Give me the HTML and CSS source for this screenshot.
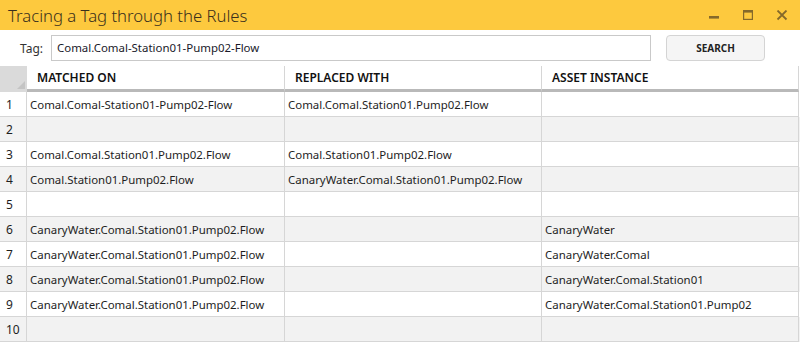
FILE: index.html
```html
<!DOCTYPE html>
<html>
<head>
<meta charset="utf-8">
<link rel="stylesheet" href="styles.css">
</head>
<body>
<div class="window">
  <header class="titlebar">
    <span class="title">Tracing a Tag through the Rules</span>
    <div class="controls">
      <svg class="ctl" width="12" height="12" viewBox="0 0 12 12"><rect x="1" y="6" width="10" height="2.6" fill="currentColor"/></svg>
      <svg class="ctl" width="12" height="12" viewBox="0 0 12 12"><rect x="1.6" y="0.6" width="8.8" height="8.8" fill="none" stroke="currentColor" stroke-width="1.2"/><rect x="1" y="0" width="10" height="2.6" fill="currentColor"/></svg>
      <svg class="ctl" width="12" height="12" viewBox="0 0 12 12"><path d="M1.5 0.5 L10.5 9.5 M10.5 0.5 L1.5 9.5" stroke="currentColor" stroke-width="1.8" fill="none"/></svg>
    </div>
  </header>
  <div class="searchbar">
    <label class="tag-label">Tag:</label>
    <div class="tag-input">Comal.Comal-Station01-Pump02-Flow</div>
    <button class="search-btn">SEARCH</button>
  </div>
  <div class="grid">
    <div class="row head">
      <div class="corner"><span class="tri"></span></div>
      <div class="cell hcell">MATCHED ON</div>
      <div class="cell hcell">REPLACED WITH</div>
      <div class="cell hcell">ASSET INSTANCE</div>
    </div>
    <div class="row"><div class="num">1</div><div class="cell">Comal.Comal-Station01-Pump02-Flow</div><div class="cell">Comal.Comal.Station01.Pump02.Flow</div><div class="cell"></div></div>
    <div class="row alt"><div class="num">2</div><div class="cell"></div><div class="cell"></div><div class="cell"></div></div>
    <div class="row"><div class="num">3</div><div class="cell">Comal.Comal.Station01.Pump02.Flow</div><div class="cell">Comal.Station01.Pump02.Flow</div><div class="cell"></div></div>
    <div class="row alt"><div class="num">4</div><div class="cell">Comal.Station01.Pump02.Flow</div><div class="cell">CanaryWater.Comal.Station01.Pump02.Flow</div><div class="cell"></div></div>
    <div class="row"><div class="num">5</div><div class="cell"></div><div class="cell"></div><div class="cell"></div></div>
    <div class="row alt"><div class="num">6</div><div class="cell">CanaryWater.Comal.Station01.Pump02.Flow</div><div class="cell"></div><div class="cell">CanaryWater</div></div>
    <div class="row"><div class="num">7</div><div class="cell">CanaryWater.Comal.Station01.Pump02.Flow</div><div class="cell"></div><div class="cell">CanaryWater.Comal</div></div>
    <div class="row alt"><div class="num">8</div><div class="cell">CanaryWater.Comal.Station01.Pump02.Flow</div><div class="cell"></div><div class="cell">CanaryWater.Comal.Station01</div></div>
    <div class="row"><div class="num">9</div><div class="cell">CanaryWater.Comal.Station01.Pump02.Flow</div><div class="cell"></div><div class="cell">CanaryWater.Comal.Station01.Pump02</div></div>
    <div class="row alt"><div class="num">10</div><div class="cell"></div><div class="cell"></div><div class="cell"></div></div>
  </div>
</div>
</body>
</html>
```
FILE: styles.css
```css
* { box-sizing: border-box; }
html, body { margin: 0; padding: 0; }
body {
  width: 800px;
  height: 343px;
  overflow: hidden;
  background: #fff;
  font-family: "Noto Sans", "Open Sans", sans-serif;
  font-size: 11.45px;
  color: #1e1e1e;
}
.titlebar {
  height: 30px;
  background: #fdc93e;
  display: flex;
  align-items: center;
  justify-content: space-between;
}
.title {
  padding-left: 8px;
  font-size: 16.7px;
  font-weight: 300;
  color: #3a2f1c;
}
.controls {
  display: flex;
  gap: 22px;
  padding-right: 12px;
  padding-top: 2px;
  color: #85692a;
}
.ctl { display: block; }
.searchbar {
  height: 36px;
  display: flex;
  align-items: center;
}
.tag-label {
  width: 51px;
  padding-left: 20px;
  color: #333;
  font-size: 12px;
}
.tag-input {
  width: 600px;
  height: 26px;
  border: 1px solid #c9c9c9;
  padding-left: 5px;
  line-height: 23px;
  color: #1a1a2a;
}
.search-btn {
  margin-left: 15px;
  width: 99px;
  height: 26px;
  border: 1px solid #d4d4d4;
  border-radius: 4px;
  background: #f5f5f5;
  font-family: "Noto Sans", sans-serif;
  font-size: 10px;
  font-weight: 700;
  color: #222;
  padding: 0;
}
.row {
  display: flex;
  height: 25px;
}
.row.alt { background: #f2f2f2; }
.num, .cell, .corner {
  border-right: 1px solid #d6d6d6;
  border-bottom: 1px solid #d6d6d6;
  line-height: 24px;
  padding-top: 1px;
  white-space: nowrap;
  overflow: hidden;
}
.num { width: 27px; padding-left: 6px; font-size: 12px; }
.cell { width: 257px; padding-left: 3px; }
.row .cell:nth-child(2) { width: 258px; }
.row.head { height: 26px; }
.corner {
  width: 27px;
  background: #dadada;
  border: none;
  position: relative;
}
.tri {
  position: absolute;
  right: 2px;
  bottom: 3px;
  width: 0;
  height: 0;
  border-left: 8px solid transparent;
  border-bottom: 8px solid #c4c4c4;
}
.hcell {
  border-bottom: 3px solid #b9b9b9;
  padding-left: 10px;
  padding-top: 0;
  font-size: 12px;
  font-weight: 600;
  color: #111;
  line-height: 23px;
}
```
